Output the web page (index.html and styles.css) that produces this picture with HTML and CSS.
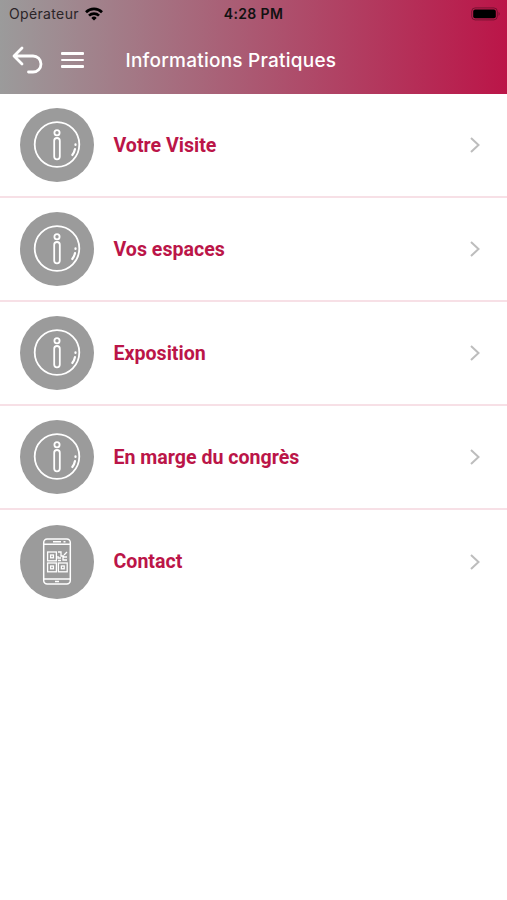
FILE: index.html
```
<!DOCTYPE html>
<html lang="fr">
<head>
    <meta charset="UTF-8">
    <meta name="viewport" content="width=device-width, initial-scale=1.0">
    <title>Informations Pratiques</title>
    <link rel="stylesheet" href="styles.css">
</head>
<body>
    <!-- Shared icons -->
    <svg class="sprite" width="0" height="0">
        <symbol id="info" viewBox="0 0 74 74">
            <g fill="none" stroke="#fff" stroke-width="1.8" stroke-linecap="round">
                <circle cx="37" cy="36.500" r="22.300"/>
                <circle cx="37" cy="24.800" r="2.600"/>
                <rect x="34.200" y="30" width="5.600" height="21.300" rx="2.800"/>
                <path d="M55.500 36.300v.6M55 41c-.5 2.500-1.300 4.200-2.700 6" stroke-width="2.200"/>
            </g>
        </symbol>
        <symbol id="chevron" viewBox="0 0 12 18">
            <path d="M2 2l7.500 7L2 16" fill="none" stroke="#bdbdbd" stroke-width="2"/>
        </symbol>
    </svg>

    <header class="header">
        <div class="status-bar">
            <div class="carrier">
                <span>Opérateur</span>
                <svg width="18" height="14" viewBox="0 0 18 14">
                    <g fill="none" stroke="#000" stroke-width="2.700">
                        <path d="M1 5.200a11.500 11.500 0 0 1 16 0"/>
                        <path d="M4 8.600a7.200 7.200 0 0 1 10 0"/>
                    </g>
                    <path d="M9 13.600L6.300 10.900a3.900 3.900 0 0 1 5.400 0z"/>
                </svg>
            </div>
            <div class="time">4:28 PM</div>
            <svg class="battery" width="30" height="14" viewBox="0 0 30 14">
                <rect x=".7" y=".9" width="25.600" height="12" rx="3.500" fill="none" stroke="#000" stroke-opacity=".35"/>
                <rect x="2.200" y="2.500" width="22.600" height="8.800" rx="2"/>
                <path d="M27.600 4.800q2 2.100 0 4.200z" fill-opacity=".4"/>
            </svg>
        </div>
        <nav class="nav-bar">
            <svg class="back" width="32" height="28" viewBox="0 0 32 28">
                <path d="M10 2L2 10l8 8M2.500 10H21a8 8 0 0 1 0 16h-4.500" fill="none" stroke="#fff" stroke-width="2.800" stroke-linecap="round" stroke-linejoin="round"/>
            </svg>
            <div class="menu">
                <span></span>
                <span></span>
                <span></span>
            </div>
            <h1>Informations Pratiques</h1>
        </nav>
    </header>

    <ul class="list">
        <li class="item">
            <svg class="icon"><use href="#info"/></svg>
            <span class="label">Votre Visite</span>
            <svg class="chevron"><use href="#chevron"/></svg>
        </li>
        <li class="item">
            <svg class="icon"><use href="#info"/></svg>
            <span class="label">Vos espaces</span>
            <svg class="chevron"><use href="#chevron"/></svg>
        </li>
        <li class="item">
            <svg class="icon"><use href="#info"/></svg>
            <span class="label">Exposition</span>
            <svg class="chevron"><use href="#chevron"/></svg>
        </li>
        <li class="item">
            <svg class="icon"><use href="#info"/></svg>
            <span class="label">En marge du congrès</span>
            <svg class="chevron"><use href="#chevron"/></svg>
        </li>
        <li class="item">
            <svg class="icon" viewBox="0 0 74 74">
                <g fill="none" stroke="#fff" stroke-width="1.500">
                    <rect x="23.700" y="14" width="26.600" height="45" rx="3.500"/>
                    <path d="M24 19.200h26M24 54h26"/>
                    <path d="M33 16.700h8M43.500 16.700h2M35 56.600h4"/>
                    <!-- QR code -->
                    <g stroke-width="1.300">
                        <rect x="27.600" y="27" width="8.800" height="8.800"/>
                        <rect x="27.600" y="38" width="8.800" height="8.800"/>
                        <rect x="38.400" y="38" width="8.800" height="8.800"/>
                        <rect x="30.600" y="30" width="2.800" height="2.800"/>
                        <rect x="30.600" y="41" width="2.800" height="2.800"/>
                        <rect x="41.400" y="41" width="2.800" height="2.800"/>
                        <path d="M38 27h3v4h3M47 27l-3 3M38 31v2h3M47 32h-4v3h4M38 35.500h3"/>
                    </g>
                </g>
            </svg>
            <span class="label">Contact</span>
            <svg class="chevron"><use href="#chevron"/></svg>
        </li>
    </ul>
</body>
</html>
```

FILE: styles.css
```
body {
    margin: 0;
    background-color: #fff;
    font-family: 'Roboto', sans-serif;
}

.sprite {
    position: absolute;
}

.header {
    height: 94px;
    background: linear-gradient(90deg, #9b9b9b, #bb1548);
}

.status-bar {
    display: grid;
    grid-template-columns: 1fr auto 1fr;
    align-items: center;
    height: 27px;
    padding: 0 6px 0 9px;
    font-family: 'Inter', sans-serif;
    font-size: 14px;
    letter-spacing: 0.35px;
    color: #111;
}

.carrier {
    display: flex;
    align-items: center;
    gap: 6px;
    color: #2b2528;
}

.time {
    margin-left: -3px;
    font-weight: 600;
}

.battery {
    justify-self: end;
}

.nav-bar {
    display: flex;
    align-items: center;
    height: 66px;
    padding-left: 12px;
}

.menu {
    display: flex;
    flex-direction: column;
    gap: 4px;
    width: 23px;
    margin-left: 17px;
}

.menu span {
    height: 2.5px;
    border-radius: 1px;
    background-color: #fff;
}

h1 {
    margin: 0 0 0 41.5px;
    font-family: 'Inter', sans-serif;
    font-size: 19px;
    font-weight: 500;
    letter-spacing: 0.24px;
    color: #fff;
}

.list {
    margin: 0;
    padding: 0;
    list-style: none;
}

.item {
    display: flex;
    align-items: center;
    box-sizing: border-box;
    height: 104px;
    padding: 0 26px 0 20px;
    border-bottom: 2px solid #f7e0e6;
}

.item:last-child {
    height: 103px;
    border-bottom: none;
}

.icon {
    width: 74px;
    height: 74px;
    border-radius: 50%;
    background-color: #9b9b9b;
}

.label {
    flex: 1;
    margin-left: 19.5px;
    font-size: 19.6px;
    font-weight: 700;
    color: #bb1548;
}

.chevron {
    width: 12px;
    height: 18px;
}
```
